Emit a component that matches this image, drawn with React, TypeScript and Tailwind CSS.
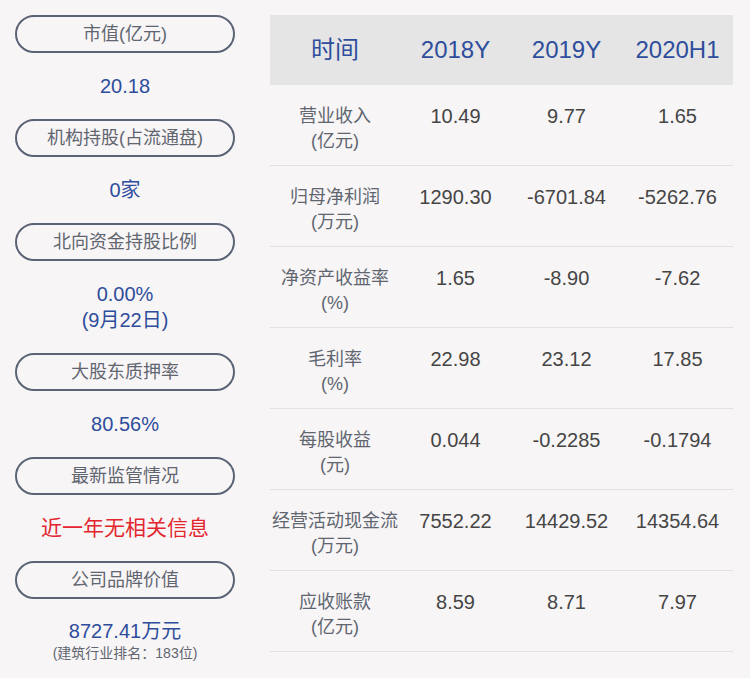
import React from "react";

const font = { fontFamily: '"Liberation Sans", "Noto Sans CJK SC", sans-serif' };

function Pill({ children }: { children: React.ReactNode }) {
  return (
    <div className="h-[38px] rounded-full border-2 border-[#5b6477] flex items-center justify-center text-[18px] text-[#5f6670]">
      {children}
    </div>
  );
}

function Val({ children, red }: { children: React.ReactNode; red?: boolean }) {
  return (
    <div
      className={`py-5 text-center leading-[26px] ${red ? "text-[21px] text-[#e3262f]" : "text-[20px] text-[#2e4d9c]"}`}
    >
      {children}
    </div>
  );
}

const rows: [string, string, string, string, string][] = [
  ["营业收入", "(亿元)", "10.49", "9.77", "1.65"],
  ["归母净利润", "(万元)", "1290.30", "-6701.84", "-5262.76"],
  ["净资产收益率", "(%)", "1.65", "-8.90", "-7.62"],
  ["毛利率", "(%)", "22.98", "23.12", "17.85"],
  ["每股收益", "(元)", "0.044", "-0.2285", "-0.1794"],
  ["经营活动现金流", "(万元)", "7552.22", "14429.52", "14354.64"],
  ["应收账款", "(亿元)", "8.59", "8.71", "7.97"],
];

export default function App() {
  return (
    <div className="w-[750px] h-[678px] bg-[#f8f5f6] flex pt-[15px]" style={font}>
      <div className="w-[220px] ml-[15px] flex flex-col">
        <Pill>市值(亿元)</Pill>
        <Val>20.18</Val>
        <Pill>机构持股(占流通盘)</Pill>
        <Val>0家</Val>
        <Pill>北向资金持股比例</Pill>
        <Val>
          0.00%
          <br />
          (9月22日)
        </Val>
        <Pill>大股东质押率</Pill>
        <Val>80.56%</Val>
        <Pill>最新监管情况</Pill>
        <Val red>近一年无相关信息</Val>
        <Pill>公司品牌价值</Pill>
        <div className="pt-[19px] text-center">
          <div className="text-[20px] leading-[26px] text-[#2e4d9c]">8727.41万元</div>
          <div className="text-[14px] leading-[18px] text-[#5f6670]">(建筑行业排名：183位)</div>
        </div>
      </div>
      <div className="ml-[35px] w-[463px] flex flex-col">
        <div className="h-[70px] bg-[#e5e5e5] grid grid-cols-[130px_111px_111px_111px] items-center text-[24px] text-[#2e4d9c] text-center">
          <div>时间</div>
          <div>2018Y</div>
          <div>2019Y</div>
          <div>2020H1</div>
        </div>
        {rows.map((r) => (
          <div
            key={r[0]}
            className="h-[81px] border-b border-[#e2e0e1] grid grid-cols-[130px_111px_111px_111px] pt-[19px] text-center"
          >
            <div className="text-[18px] leading-[25px] text-[#5f6670]">
              <div>{r[0]}</div>
              <div>{r[1]}</div>
            </div>
            <div className="text-[20px] leading-[25px] text-[#454545]">{r[2]}</div>
            <div className="text-[20px] leading-[25px] text-[#454545]">{r[3]}</div>
            <div className="text-[20px] leading-[25px] text-[#454545]">{r[4]}</div>
          </div>
        ))}
      </div>
    </div>
  );
}
